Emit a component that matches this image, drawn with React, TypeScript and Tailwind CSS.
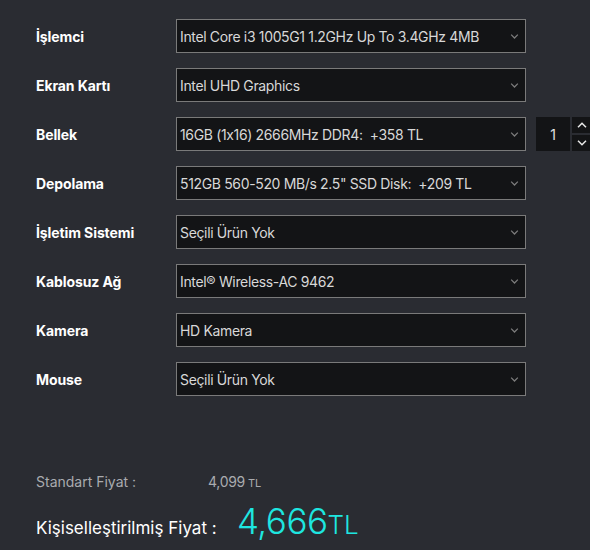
const rows = [
  { label: 'İşlemci', value: 'Intel Core i3 1005G1 1.2GHz Up To 3.4GHz 4MB' },
  { label: 'Ekran Kartı', value: 'Intel UHD Graphics' },
  { label: 'Bellek', value: '16GB (1x16) 2666MHz DDR4:  +358 TL', qty: true },
  { label: 'Depolama', value: '512GB 560-520 MB/s 2.5" SSD Disk:  +209 TL' },
  { label: 'İşletim Sistemi', value: 'Seçili Ürün Yok' },
  { label: 'Kablosuz Ağ', value: 'Intel® Wireless-AC 9462' },
  { label: 'Kamera', value: 'HD Kamera' },
  { label: 'Mouse', value: 'Seçili Ürün Yok' },
]

function Chevron({ up = false, className = '' }: { up?: boolean; className?: string }) {
  return (
    <svg viewBox="0 0 10 6" className={className} fill="none" stroke="currentColor" strokeWidth="1.5">
      {up ? <path d="M1 5.2 5 1.2l4 4" /> : <path d="M1 .8l4 4 4-4" />}
    </svg>
  )
}

export default function App() {
  return (
    <div
      className="w-[590px] h-[550px] bg-[#2a2c32] overflow-hidden"
      style={{ fontFamily: 'Inter, "Noto Sans", sans-serif' }}
    >
      <div className="pt-[19px] pl-[36px] flex flex-col gap-[15px]">
        {rows.map((row) => (
          <div key={row.label} className="flex items-center h-[34px]">
            <div className="w-[140px] shrink-0 text-[14px] font-bold text-white tracking-[-0.1px]">{row.label}</div>
            <div className="w-[350px] shrink-0 h-[34px] bg-[#131416] border border-[#7a7a7a] flex items-center justify-between pl-[3px] pr-[6px]">
              <span className="text-[14px] text-[#d8d8d8] whitespace-pre tracking-[-0.35px]">{row.value}</span>
              <Chevron className="w-[9px] h-[5px] text-[#7c7c7c]" />
            </div>
            {row.qty && (
              <div className="flex shrink-0 ml-[10px] h-[34px] gap-[2px]">
                <div className="w-[34px] bg-[#131416] flex items-center justify-center text-[14px] text-[#e0e0e0]">1</div>
                <div className="flex flex-col gap-[2px]">
                  <div className="w-[20px] h-[16px] bg-[#131416] flex items-center justify-center">
                    <Chevron up className="w-[10px] h-[6px] text-[#e8e8e8]" />
                  </div>
                  <div className="w-[20px] h-[16px] bg-[#131416] flex items-center justify-center">
                    <Chevron className="w-[10px] h-[6px] text-[#e8e8e8]" />
                  </div>
                </div>
              </div>
            )}
          </div>
        ))}
      </div>

      <div className="pl-[36px] mt-[75px]">
        <div className="flex items-baseline h-[22px]">
          <span className="w-[172px] text-[14px] text-[#a9abaf]">Standart Fiyat :</span>
          <span className="text-[14px] text-[#a9abaf] tracking-[-0.3px]">4,099</span>
          <span className="text-[11px] text-[#a9abaf] ml-[3px]">TL</span>
        </div>
        <div className="flex items-baseline mt-[11px]">
          <span className="w-[201px] text-[17px] text-white">Kişiselleştirilmiş Fiyat :</span>
          <span className="text-[35px] font-light text-[#1ee6e0] leading-none tracking-[-0.5px]">4,666</span>
          <span className="text-[26px] font-light text-[#1ee6e0] leading-none">TL</span>
        </div>
      </div>
    </div>
  )
}
